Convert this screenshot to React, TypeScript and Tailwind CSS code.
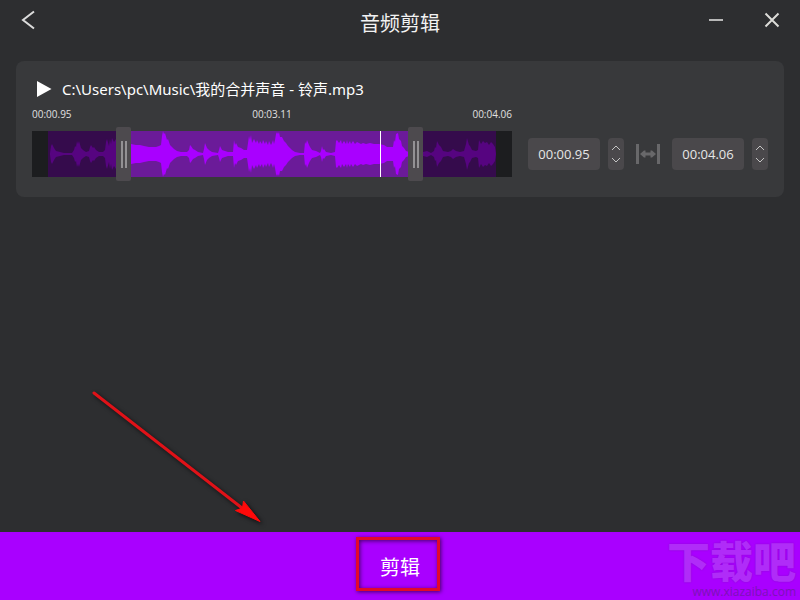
import { useState } from "react";

// [x, half height] pairs of the clip's volume envelope, on a 480 x 46 canvas
const PEAKS: [number, number][] = [
  [18, 1], [19, 8], [20, 10], [22, 6], [24, 3], [28, 2], [32, 1], [40, 1], [42, 4], [43, 8], [44, 7], [45, 13], [46, 10], [47, 13],
  [49, 6], [51, 4], [54, 2], [57, 3], [58, 7], [59, 9], [61, 6], [62, 7], [64, 4], [67, 2], [71, 2], [73, 4], [74, 12], [75, 15],
  [77, 8], [78, 15], [79, 10], [80, 16], [82, 12], [84, 15], [86, 11], [88, 13], [92, 10], [99, 10], [104, 9], [108, 9], [112, 8],
  [117, 7], [121, 7], [124, 7], [127, 8], [129, 9], [130, 18], [131, 23], [132, 20], [133, 21], [135, 14], [136, 15], [138, 9],
  [140, 7], [142, 5], [145, 3], [149, 2], [155, 2], [157, 4], [158, 9], [159, 8], [161, 5], [163, 4], [166, 2], [171, 1], [172, 5],
  [173, 11], [175, 6], [177, 4], [180, 2], [186, 1], [187, 4], [188, 8], [190, 4], [193, 3], [196, 2], [201, 2], [202, 14],
  [203, 9], [204, 11], [206, 7], [209, 6], [212, 4], [215, 4], [216, 11], [217, 18], [218, 14], [219, 19], [220, 11], [222, 15],
  [224, 11], [225, 14], [227, 10], [228, 13], [230, 10], [231, 14], [233, 10], [234, 13], [236, 9], [237, 13], [239, 9], [240, 11],
  [241, 14], [242, 10], [243, 14], [244, 20], [245, 22], [246, 20], [247, 22], [248, 17], [250, 17], [252, 13], [254, 11],
  [256, 8], [258, 6], [260, 4], [263, 2], [268, 1], [272, 1], [273, 12], [274, 10], [275, 14], [277, 9], [278, 7], [280, 4],
  [284, 3], [288, 1], [289, 3], [290, 8], [291, 4], [292, 5], [294, 2], [299, 1], [303, 2], [304, 13], [305, 14], [307, 11],
  [309, 14], [310, 10], [312, 13], [314, 10], [315, 14], [316, 10], [318, 13], [319, 10], [321, 13], [323, 10], [325, 12],
  [329, 10], [331, 11], [334, 10], [338, 11], [342, 10], [347, 10], [352, 9], [355, 7], [357, 7], [361, 7], [362, 14], [363, 12],
  [364, 20], [366, 21], [367, 15], [369, 13], [370, 8], [372, 6], [374, 3], [377, 2], [391, 2], [395, 3], [399, 1], [402, 3],
  [403, 7], [404, 6], [405, 13], [407, 9], [409, 7], [411, 3], [416, 2], [419, 3], [421, 5], [424, 3], [428, 2], [432, 3],
  [434, 10], [435, 16], [437, 9], [438, 8], [440, 4], [444, 3], [446, 4], [447, 14], [449, 10], [451, 13], [453, 11], [455, 12],
  [457, 9], [459, 12], [461, 10], [463, 7], [464, 0],
];

const toPoints = (peaks: [number, number][]) =>
  [
    ...peaks.map(([x, h]) => `${x},${23 - h}`),
    ...[...peaks].reverse().map(([x, h]) => `${x},${23 + h}`),
  ].join(" ");

const thumb =
  "pointer-events-none absolute inset-0 m-0 h-full w-full appearance-none bg-transparent [&::-webkit-slider-thumb]:pointer-events-auto [&::-webkit-slider-thumb]:h-[54px] [&::-webkit-slider-thumb]:w-[15px] [&::-webkit-slider-thumb]:cursor-ew-resize [&::-webkit-slider-thumb]:appearance-none [&::-webkit-slider-thumb]:rounded-xs [&::-webkit-slider-thumb]:bg-[#4d4a4e] [&::-webkit-slider-thumb]:bg-[linear-gradient(90deg,#939194_2px,transparent_2px,transparent_4px,#939194_4px)] [&::-webkit-slider-thumb]:bg-[length:6px_27px] [&::-webkit-slider-thumb]:bg-center [&::-webkit-slider-thumb]:bg-no-repeat";

function Waveform() {
  const [start, setStart] = useState(181);
  const [end, setEnd] = useState(809);
  const points = toPoints(PEAKS);
  const left = 8 + start * 0.465;
  const right = 8 + end * 0.465;

  return (
    <div className="relative mt-1 py-1">
      <svg className="block h-[46px] w-full" viewBox="0 0 480 46" preserveAspectRatio="none">
        <defs>
          <clipPath id="selection">
            <rect x={left} y="0" width={Math.max(0, right - left)} height="46" />
          </clipPath>
        </defs>
        <rect width="480" height="46" fill="#1c1d1f" />
        <rect x="16" width="448" height="46" fill="#350b4c" />
        <polygon points={points} fill="#560480" />
        <g clipPath="url(#selection)">
          <rect width="480" height="46" fill="#6b1b99" />
          <polygon points={points} fill="#a900ff" />
        </g>
        <rect x="348" width="1" height="46" fill="#ffffff" />
      </svg>
      <input
        type="range"
        aria-label="开始"
        min={0}
        max={1000}
        value={start}
        onChange={(e) => setStart(Math.min(Number(e.target.value), end))}
        className={thumb}
      />
      <input
        type="range"
        aria-label="结束"
        min={0}
        max={1000}
        value={end}
        onChange={(e) => setEnd(Math.max(Number(e.target.value), start))}
        className={thumb}
      />
    </div>
  );
}

function TimeField({ label, initial }: { label: string; initial: number }) {
  const [value, setValue] = useState(initial);
  const text = `00:${value.toFixed(2).padStart(5, "0")}`;

  return (
    <div className="flex gap-2">
      <input
        aria-label={label}
        value={text}
        readOnly
        className="h-8 w-[72px] rounded-sm bg-[#4a484b] text-center text-[13px] text-[#e6e6e6] outline-none"
      />
      <div className="flex h-8 w-4 flex-col rounded-sm bg-[#4a484b] text-[#c4c4c4]">
        <button
          aria-label={`${label} +`}
          onClick={() => setValue(value + 0.01)}
          className="flex flex-1 items-center justify-center pt-1"
        >
          <svg width="10" height="6" viewBox="0 0 10 6" fill="none" stroke="currentColor">
            <path d="M1 5 5 1l4 4" />
          </svg>
        </button>
        <button
          aria-label={`${label} -`}
          onClick={() => setValue(Math.max(0, value - 0.01))}
          className="flex flex-1 items-center justify-center pb-1"
        >
          <svg width="10" height="6" viewBox="0 0 10 6" fill="none" stroke="currentColor">
            <path d="m1 1 4 4 4-4" />
          </svg>
        </button>
      </div>
    </div>
  );
}

function Header() {
  return (
    <header className="grid h-[61px] grid-cols-[1fr_auto_1fr] items-start pt-2">
      <button aria-label="返回" className="ml-4 flex size-6 items-center justify-center text-[#dcdcdc]">
        <svg width="24" height="24" viewBox="0 0 24 24" fill="none" stroke="currentColor" strokeWidth="2">
          <path d="M18 3.500 7 12l11 8.500" />
        </svg>
      </button>
      <h1 className="text-xl leading-8 text-[#f2f2f2]">音频剪辑</h1>
      <div className="flex justify-end gap-8 pr-4">
        <button aria-label="最小化" className="flex size-6 items-center justify-center">
          <svg width="24" height="24" viewBox="0 0 24 24" fill="#b8b8b8">
            <rect x="5" y="11" width="14" height="2" />
          </svg>
        </button>
        <button aria-label="关闭" className="flex size-6 items-center justify-center">
          <svg width="24" height="24" viewBox="0 0 24 24" fill="none" stroke="#dcdcd8" strokeWidth="2">
            <path d="m5.500 5.500 13 13M18.500 5.500l-13 13" />
          </svg>
        </button>
      </div>
    </header>
  );
}

function ClipCard() {
  return (
    <section className="mx-4 rounded-lg bg-[#38393b] p-4">
      <div className="flex h-6 items-center gap-2 pl-1">
        <button aria-label="播放" className="flex w-[18px] items-center">
          <svg width="18" height="18" viewBox="0 0 18 18" fill="#ffffff">
            <path d="M1 1v16l14.500-8z" />
          </svg>
        </button>
        <span className="font-['Noto_Sans','Noto_Sans_CJK_SC',sans-serif] text-[15px] text-white">
          C:\Users\pc\Music\我的合并声音 - 铃声.mp3
        </span>
      </div>
      <div className="flex items-end gap-4">
        <div className="min-w-0 flex-1">
          <div className="mt-1 flex h-[18px] items-center justify-between text-[10px] text-[#e0e0e0]">
            <span>00:00.95</span>
            <span>00:03.11</span>
            <span>00:04.06</span>
          </div>
          <Waveform />
        </div>
        <div className="flex h-[54px] items-center gap-3">
          <TimeField label="开始时间" initial={0.95} />
          <svg width="24" height="20" viewBox="0 0 24 20" fill="#68686a">
            <rect width="3" height="20" />
            <rect x="21" width="3" height="20" />
            <path d="M4 10l4-3.500h1.500v2h5v-2H16l4 3.500-4 3.500h-1.500v-2h-5v2H8z" />
          </svg>
          <TimeField label="结束时间" initial={4.06} />
        </div>
      </div>
    </section>
  );
}

export default function App() {
  return (
    <div className="flex min-h-screen flex-col bg-[#2d2e30] font-['Open_Sans','Noto_Sans_CJK_SC',sans-serif]">
      <Header />
      <main className="relative flex-1">
        <ClipCard />
        <svg
          className="pointer-events-none absolute bottom-1 left-[84px] drop-shadow-[2px_2px_2px_rgba(0,0,0,0.7)]"
          width="184"
          height="144"
          viewBox="0 0 184 144"
        >
          <path d="m10 9 148 115" stroke="#e01218" strokeWidth="3" strokeLinecap="round" />
          <path d="M176 137.500 151.500 126.500 158.500 124 159.500 117z" fill="#ff0a0a" stroke="#ff0a0a" />
        </svg>
      </main>
      <footer className="relative h-[68px] overflow-hidden bg-[#a900ff]">
        <button className="flex h-full w-full items-center justify-center pt-1 text-xl text-white">
          <span className="relative leading-[30px]">
            剪辑
            <span className="absolute -top-4 -right-5 -bottom-2 -left-6 border-3 border-[#e3082c] shadow-[1px_1px_4px_rgba(0,0,0,0.6),inset_1px_1px_4px_rgba(0,0,0,0.6)]" />
          </span>
        </button>
        <div className="pointer-events-none absolute top-2 right-1 text-right">
          <div className="text-[43px] leading-[44px] font-black text-[#b02cf8] [text-shadow:0_0_2px_#8a08d0]">
            下载吧
          </div>
          <div className="text-xs text-[#7d12b8]">www.xiazaiba.com</div>
        </div>
      </footer>
    </div>
  );
}
